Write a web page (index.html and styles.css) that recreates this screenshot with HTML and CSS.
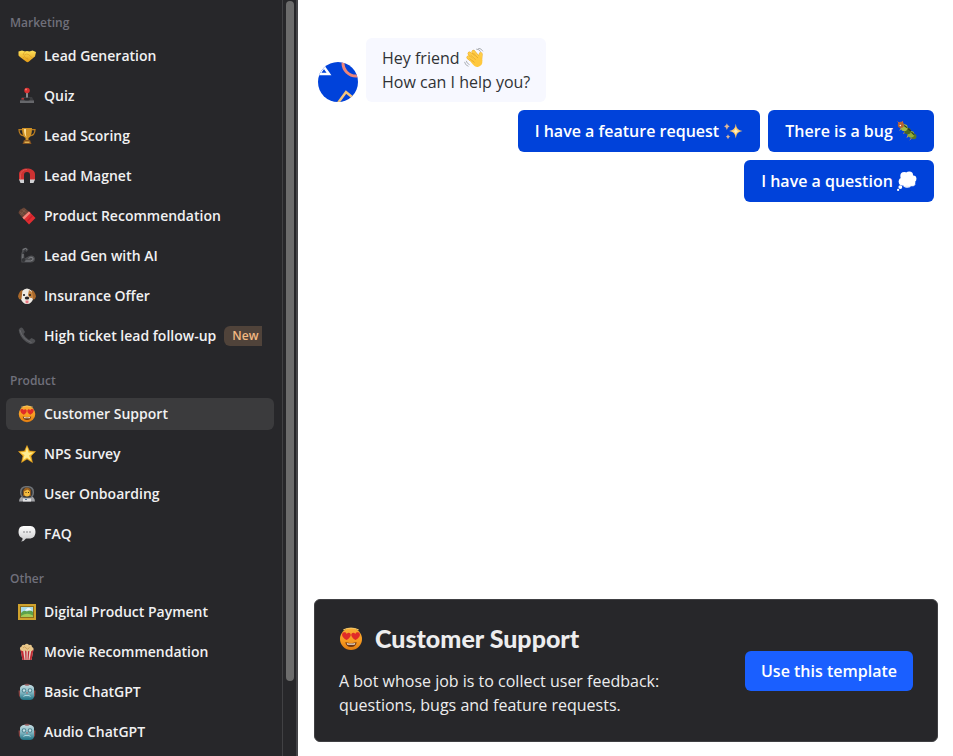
FILE: index.html
```html
<!DOCTYPE html>
<html lang="en">
<head>
<meta charset="utf-8">
<meta name="viewport" content="width=device-width, initial-scale=1">
<title>Templates</title>
<link rel="stylesheet" href="styles.css">
</head>
<body>
<svg class="sprite" aria-hidden="true">
  <defs>
    <linearGradient id="gold" x1="0" y1="0" x2="0" y2="1"><stop offset="0" stop-color="#ffe15a"/><stop offset="1" stop-color="#e39a16"/></linearGradient>
    <linearGradient id="face" x1="0" y1="0" x2="0" y2="1"><stop offset="0" stop-color="#f9ad35"/><stop offset=".6" stop-color="#f79a20"/><stop offset="1" stop-color="#e07c10"/></linearGradient>
    <linearGradient id="teal" x1="0" y1="0" x2="0" y2="1"><stop offset="0" stop-color="#c5dde2"/><stop offset=".5" stop-color="#86b9c4"/><stop offset="1" stop-color="#1f7183"/></linearGradient>
    <linearGradient id="pale" x1="0" y1="0" x2="0" y2="1"><stop offset="0" stop-color="#ffffff"/><stop offset="1" stop-color="#c9c9cb"/></linearGradient>
  </defs>
  <symbol id="handshake" viewBox="0 0 36 36">
    <path d="M1 9l7-2 6 2 4-1 5 1 6-2 7 3-2 9-4 3-8 7q-3 3-6 0L4 20 1 17z" fill="url(#gold)"/>
    <path d="M14 9l-4 6q3 3 7-1l4 1 9 8M9 23l4-4 3 4 3-1 1 4" fill="none" stroke="#d0901c" stroke-width="1"/>
  </symbol>
  <symbol id="joystick" viewBox="0 0 36 36">
    <path d="M8 20h20l4 8H4z" fill="#3c3d40"/><path d="M4 27h28v5H4z" fill="#66676b"/>
    <path d="M16 10h4v15h-4z" fill="#8b8b8f"/><ellipse cx="18" cy="24" rx="6" ry="3" fill="#29292c"/>
    <circle cx="18" cy="7" r="5.5" fill="#d92f2f"/><circle cx="16" cy="5" r="2" fill="#f6766b"/>
    <rect x="7" y="22" width="5" height="3" rx="1" fill="#b93536"/>
  </symbol>
  <symbol id="trophy" viewBox="0 0 36 36">
    <path d="M9 5H2q0 12 11 13M27 5h7q0 12-11 13" fill="none" stroke="#b97c20" stroke-width="2.5"/>
    <path d="M8 2h20q0 17-7 20v5h-6v-5Q8 19 8 2z" fill="#cf9226"/><path d="M12 4h4q-1 11 1 17-5-5-5-17z" fill="#ffe39a"/>
    <path d="M12 26h12l3 8H9z" fill="#86521f"/><path d="M13 29h10v3H13z" fill="#dfb14e"/>
  </symbol>
  <symbol id="magnet" viewBox="0 0 36 36">
    <path d="M2 26V15C1-1 35-1 34 15v11H24V16q0-6-6-6t-6 6v10z" fill="#cc3232"/>
    <path d="M5 24V15Q7 5 18 5" fill="none" stroke="#dd5450" stroke-width="2"/>
    <path d="M2 25h10v7H5zM24 25h10l-3 7h-7z" fill="#d0d1d4"/>
  </symbol>
  <symbol id="chocolate" viewBox="0 0 36 36">
    <path d="M12 1l12 10-12 14L1 12q0-4 4-7z" fill="#684436"/><path d="M4 10l12 9M8 5l12 9M15 4L5 16" stroke="#85604e" stroke-width="1.3"/>
    <path d="M22 9l13 13-13 13L9 21z" fill="#e02d31"/><path d="M22 9l3 3-13 13-3-4z" fill="#f0867a"/><path d="M19 28l10-11" stroke="#c8202b" stroke-width="3"/>
  </symbol>
  <symbol id="arm" viewBox="0 0 36 36">
    <path d="M8 4l8-3 5 4-4 5-2-2-3 4 1 11 9-5q10-3 12 5 0 8-8 8H7Q4 20 8 9z" fill="#4c4d50"/>
    <path d="M10 5l5-2 3 2M10 14l-1 14h16q7-1 5-6-4-4-9 1" fill="none" stroke="#85868a" stroke-width="1.8"/>
    <circle cx="11" cy="26" r="4" fill="#333437"/><path d="M15 5l-5 9" stroke="#303135" stroke-width="2"/>
  </symbol>
  <symbol id="dog" viewBox="0 0 36 36">
    <path d="M8 8Q18-2 28 8l3 14q-4 12-13 12T5 22z" fill="#eeeae3"/>
    <path d="M9 6Q3 6 0 19q2 8 7 5zM27 6q6 0 9 13-2 8-7 5z" fill="#a9682a"/>
    <path d="M22 6q10 5 7 16-8 1-9-7z" fill="#c5833e"/><circle cx="12" cy="16" r="2.2" fill="#211f1f"/><circle cx="24" cy="16" r="2.2" fill="#211f1f"/>
    <ellipse cx="18" cy="22" rx="4.5" ry="3" fill="#262323"/><path d="M15 27h6v4q-3 4-6 0z" fill="#e97783"/>
  </symbol>
  <symbol id="phone" viewBox="0 0 36 36">
    <path d="M4 2q-4 3-2 8 5 17 22 24 6 1 10-4 2-3-1-5l-6-3-5 4Q14 21 11 14l3-4-4-7q-3-3-6-1z" fill="#4f5053"/>
    <path d="M4 6q4 18 23 25" fill="none" stroke="#69696d" stroke-width="2"/>
  </symbol>
  <symbol id="hearts" viewBox="0 0 36 36">
    <circle cx="18" cy="18" r="16.5" fill="url(#face)"/>
    <path d="M7 4q11-5 22 0" fill="none" stroke="#ffd06a" stroke-width="1.5" stroke-linecap="round"/>
    <path d="M11.500 19.500Q5 16 4.500 11.500q.5-4.500 4.500-3.500 2 .5 2.500 2.500 2-2.500 4.500-1.500 3 2 .5 6-2 3-5 4.500zM24.500 19.500q6.500-3.500 7-8-.5-4.500-4.500-3.500-2 .5-2.500 2.500-2-2.500-4.500-1.500-3 2-.5 6 2 3 5 4.500z" fill="#e02a28"/>
    <path d="M9.500 23q8.500 2.500 17 0-1 7-8.500 7t-8.500-7z" fill="#6f3511"/><path d="M11.500 24q6.500 1.500 13 0l-1 2.500h-11z" fill="#f8e7d0"/>
  </symbol>
  <symbol id="star" viewBox="0 0 36 36">
    <path d="M18 1l5 11 12 1-9 9 3 13-11-7-11 7 3-13-9-9 12-1z" fill="#f7bd2d" stroke="#e99e1a"/>
    <path d="M18 4l3 11 10 0-9 6 4 10-8-6-8 5 3-10-8-5 10-1z" fill="#ffec92"/>
  </symbol>
  <symbol id="astronaut" viewBox="0 0 36 36">
    <path d="M2 33q0-12 16-12t16 12z" fill="#a3a4a7"/><rect x="4" y="2" width="28" height="25" rx="11" fill="#6f7276"/><rect x="7" y="5" width="22" height="20" rx="9" fill="#34373a"/>
    <path d="M10 22V12Q12 6 19 6t7 7v9z" fill="#8a561e"/><ellipse cx="18" cy="16" rx="6" ry="7" fill="#f5bd40"/><path d="M12 12q5 0 7-4 1 3 6 4-1-7-7-7t-6 7z" fill="#9b611f"/>
    <circle cx="16" cy="15" r="1"/><circle cx="21" cy="15" r="1"/><path d="M10 27h16v6H10z" fill="#e3e3e4"/><path d="M14 29h4" stroke="#4f75a1" stroke-width="2"/>
  </symbol>
  <symbol id="speech" viewBox="0 0 36 36">
    <path d="M11 2h14q10 1 10 12T25 27H16q-4 6-10 6 4-3 3-7-8-2-8-12Q1 2 11 2z" fill="url(#pale)"/>
    <g fill="#77787c"><circle cx="12" cy="14" r="1.600"/><circle cx="18" cy="14" r="1.600"/><circle cx="24" cy="14" r="1.600"/></g>
  </symbol>
  <symbol id="frame" viewBox="0 0 36 36">
    <path d="M0 2h36v32H0z" fill="#cfa22d"/><path d="M4 6h28v24H4z" fill="#8e701d"/><path d="M6 8h24v20H6z" fill="#a9ddec"/>
    <path d="M6 20q6-7 12-3 7-5 12 1v10H6z" fill="#5da24c"/><path d="M6 26q12-8 24-1v3H6z" fill="#a3cb57"/><path d="M17 12q4-5 8 0l3 3H13z" fill="#eff8fa"/>
  </symbol>
  <symbol id="popcorn" viewBox="0 0 36 36">
    <path d="M5 13h26l-4 21H9z" fill="#e6cfc4"/><path d="M5 13h5l3 21H9zM14 13h3v21h-2zM20 13h3l-2 21h-2zM27 13h4l-4 21h-4z" fill="#c02c34"/>
    <path d="M5 14q-3-5 2-7 1-5 6-3 5-5 9 0 6-2 6 4 5 2 2 6-3 4-7 1-5 4-8 0-6 3-10-1z" fill="#e8c68a"/><path d="M10 10q3-5 6 0t7-1" fill="none" stroke="#c99550" stroke-width="1.5"/>
  </symbol>
  <symbol id="robot" viewBox="0 0 36 36">
    <path d="M1 15h4v12H2zM31 15h4l-1 12h-3z" fill="#8a4442"/>
    <path d="M4 9q3-6 14-6t14 6v19q-2 6-8 6H12q-7 0-8-6z" fill="url(#teal)"/>
    <ellipse cx="18" cy="3.500" rx="5" ry="2" fill="#8f5a5c"/><g fill="#4c8290"><circle cx="12" cy="15" r="4.500"/><circle cx="24" cy="15" r="4.500"/></g>
    <g fill="#c9e4e9"><circle cx="12" cy="15" r="2.500"/><circle cx="24" cy="15" r="2.500"/></g><path d="M18 17l-2 4h4z" fill="#b05f60"/><path d="M11 27l3-2h8l3 2" fill="none" stroke="#a9d6dd" stroke-width="2"/>
  </symbol>
  <symbol id="wave" viewBox="0 0 36 36">
    <g fill="none" stroke="#e9aa28" stroke-width="7" stroke-linecap="round"><path d="M8 17l13 10M10 10l13 12M17 7l10 12M30 11l-1 13"/></g>
    <g fill="none" stroke="#ffcd47" stroke-width="5.4" stroke-linecap="round"><path d="M8 17l13 10M10 10l13 12M17 7l10 12M30 11l-1 13"/></g>
    <path d="M14 22l14-9 5 9q1 10-8 12-5 1-12-8z" fill="#ffc83d"/><path d="M12 13l9 8M17 9l8 9M10 19l9 7" stroke="#d8951e"/>
    <path d="M22 2q6 0 8 5M25 0q7 1 9 6M1 25q1 6 7 8M4 23q1 5 6 7" fill="none" stroke="#a8abb0" stroke-width="1.7"/>
  </symbol>
  <symbol id="sparkles" viewBox="0 0 36 36">
    <path d="M23 5q1 12 12 13-11 1-12 13-1-12-12-13 11-1 12-13z" fill="#ffc96b"/><path d="M23 12q1 6 6 6-5 1-6 6-1-5-6-6 5 0 6-6z" fill="#fff0c0"/>
    <path d="M7 4q1 5 5 6-4 1-5 6-1-5-5-6 4-1 5-6zM9 24q1 4 4 4-3 1-4 5-1-4-4-5 3 0 4-4z" fill="#d9b69a"/>
  </symbol>
  <symbol id="bug" viewBox="0 0 36 36">
    <path d="M8 12l-3 5M15 17l-3 6M21 24l-3 6M28 29l-5 5" stroke="#e4a047" stroke-width="1.600"/>
    <circle cx="30" cy="28" r="5" fill="#55752a"/><circle cx="25" cy="24" r="6" fill="#91ae38"/><circle cx="19" cy="18" r="6" fill="#496724"/><circle cx="13" cy="12" r="6" fill="#a4ba43"/><circle cx="7" cy="7" r="5.500" fill="#b66332"/>
    <path d="M5 5L1 1M9 4l1-4" stroke="#d4663c" stroke-width="1.6"/><circle cx="6" cy="8" r="1.4" fill="#fff"/><path d="M13 8l5 4M20 14l5 4M26 20l5 5" stroke="#27371f" stroke-width="2"/>
  </symbol>
  <symbol id="thought" viewBox="0 0 36 36">
    <g fill="#fff"><circle cx="13" cy="9" r="7"/><circle cx="22" cy="8" r="7"/><circle cx="29" cy="14" r="6"/><circle cx="27" cy="21" r="6"/><circle cx="18" cy="23" r="7"/><circle cx="10" cy="19" r="7"/><circle cx="19" cy="15" r="9"/><circle cx="6" cy="29" r="3.5"/><circle cx="2" cy="34" r="2"/></g>
    <path d="M10 26q4 4 8 1 5 4 8 0 5 1 7-3" fill="none" stroke="#d9e1f2" stroke-width="1.2"/>
  </symbol>
</svg>
<div class="app">
  <aside class="sidebar">
    <nav class="menu" aria-label="Templates">
      <section class="group">
        <h2 class="group-label">Marketing</h2>
        <button class="item" type="button"><svg class="icon"><use href="#handshake"/></svg><span>Lead Generation</span></button>
        <button class="item" type="button"><svg class="icon"><use href="#joystick"/></svg><span>Quiz</span></button>
        <button class="item" type="button"><svg class="icon"><use href="#trophy"/></svg><span>Lead Scoring</span></button>
        <button class="item" type="button"><svg class="icon"><use href="#magnet"/></svg><span>Lead Magnet</span></button>
        <button class="item" type="button"><svg class="icon"><use href="#chocolate"/></svg><span>Product Recommendation</span></button>
        <button class="item" type="button"><svg class="icon"><use href="#arm"/></svg><span>Lead Gen with AI</span></button>
        <button class="item" type="button"><svg class="icon"><use href="#dog"/></svg><span>Insurance Offer</span></button>
        <button class="item" type="button"><svg class="icon"><use href="#phone"/></svg><span>High ticket lead follow-up</span><span class="badge">New</span></button>
      </section>
      <section class="group">
        <h2 class="group-label">Product</h2>
        <button class="item item-active" type="button" aria-current="true"><svg class="icon"><use href="#hearts"/></svg><span>Customer Support</span></button>
        <button class="item" type="button"><svg class="icon"><use href="#star"/></svg><span>NPS Survey</span></button>
        <button class="item" type="button"><svg class="icon"><use href="#astronaut"/></svg><span>User Onboarding</span></button>
        <button class="item" type="button"><svg class="icon"><use href="#speech"/></svg><span>FAQ</span></button>
      </section>
      <section class="group">
        <h2 class="group-label">Other</h2>
        <button class="item" type="button"><svg class="icon"><use href="#frame"/></svg><span>Digital Product Payment</span></button>
        <button class="item" type="button"><svg class="icon"><use href="#popcorn"/></svg><span>Movie Recommendation</span></button>
        <button class="item" type="button"><svg class="icon"><use href="#robot"/></svg><span>Basic ChatGPT</span></button>
        <button class="item" type="button"><svg class="icon"><use href="#robot"/></svg><span>Audio ChatGPT</span></button>
      </section>
    </nav>
    <div class="track"><div class="thumb"></div></div>
  </aside>
  <main class="preview">
    <section class="chat">
      <div class="message">
        <svg class="avatar" viewBox="0 0 40 40" aria-hidden="true">
          <clipPath id="round"><circle cx="20" cy="20" r="20"/></clipPath>
          <g clip-path="url(#round)"><path d="M0 0h40v40H0z" fill="#0042da"/><path d="M6 5l5 7H1z" fill="#0042da" stroke="#fff" stroke-width="2.5"/><circle cx="38" cy="1" r="13" fill="none" stroke="#ed8579" stroke-width="3"/><path d="M20 41l8-11 12 10" fill="none" stroke="#f4c47c" stroke-width="2.5"/></g>
        </svg>
        <p class="bubble">Hey friend <svg class="emoji"><use href="#wave"/></svg><br>How can I help you?</p>
      </div>
      <div class="replies">
        <button class="reply" type="button">I have a feature request <svg class="emoji"><use href="#sparkles"/></svg></button>
        <button class="reply" type="button">There is a bug <svg class="emoji"><use href="#bug"/></svg></button>
        <button class="reply" type="button">I have a question <svg class="emoji"><use href="#thought"/></svg></button>
      </div>
    </section>
    <section class="card">
      <div class="card-body">
        <h1 class="card-title"><svg class="card-icon"><use href="#hearts"/></svg>Customer Support</h1>
        <p class="card-text">A bot whose job is to collect user feedback: questions, bugs and feature requests.</p>
      </div>
      <button class="cta" type="button">Use this template</button>
    </section>
  </main>
</div>
</body>
</html>
```
FILE: styles.css
```css
* { box-sizing: border-box; }
body { margin: 0; background: #fff; font-family: "Open Sans", "Noto Sans", sans-serif; font-size: 16px; line-height: 24px; }
h1, h2, p { margin: 0; }
button { border: 0; font: inherit; cursor: pointer; }
.sprite { position: absolute; width: 0; height: 0; }
.app { display: flex; height: 100vh; }
.sidebar { display: flex; flex: none; background: #27272a; border-right: 2px solid #454548; overflow: hidden; }
.menu { display: flex; flex-direction: column; gap: 20px; width: 282px; padding: 14px 8px 8px 6px; }
.group { display: flex; flex-direction: column; gap: 8px; }
.group-label { padding-left: 4px; font-size: 12px; line-height: 18px; font-weight: 600; color: #70707b; }
.item { display: flex; align-items: center; gap: 8px; height: 32px; padding: 0 12px; border-radius: 6px; background: none; color: #f1f1f2; font-size: 14px; font-weight: 600; line-height: 20px; white-space: nowrap; text-align: left; }
.item-active { background: #3b3b3d; }
.icon { flex: none; width: 18px; height: 18px; }
.badge { padding: 0 4px 0 8px; border-radius: 6px 0 0 6px; background: #50433a; color: #f3b982; font-size: 12px; }
.track { width: 14px; padding: 1px 2px 0 3px; border-left: 1px solid #414144; }
.thumb { height: 90%; border-radius: 4px; background: #6c6c6c; }
.preview { display: flex; flex: 1; flex-direction: column; justify-content: space-between; min-width: 0; padding: 38px 15px 14px 16px; }
.chat { display: flex; flex-direction: column; gap: 8px; padding: 0 4px; }
.message { display: flex; align-items: flex-end; gap: 8px; }
.avatar { flex: none; width: 40px; height: 40px; }
.bubble { padding: 8px 16px; border-radius: 6px; background: #f7f8ff; color: #303235; }
.emoji { width: 20px; height: 20px; vertical-align: -4px; }
.replies { display: flex; flex-wrap: wrap; justify-content: flex-end; gap: 8px; align-self: flex-end; max-width: 480px; }
.reply { padding: 9px 17px; border-radius: 6px; background: #0042da; color: #fff; font-weight: 600; }
.card { display: flex; align-items: center; justify-content: space-between; gap: 24px; padding: 24px; border: 1px solid #404043; border-radius: 6px; background: #27272a; color: #ededee; }
.card-body { display: flex; flex-direction: column; gap: 16px; max-width: 344px; }
.card-title { display: flex; align-items: center; gap: 12px; font-family: Lato, "Open Sans", sans-serif; font-size: 25px; line-height: 29px; font-weight: 900; }
.card-icon { width: 24px; height: 24px; }
.cta { flex: none; padding: 8px 16px; border-radius: 6px; background: #1a5fff; color: #fff; font-weight: 600; }
```
